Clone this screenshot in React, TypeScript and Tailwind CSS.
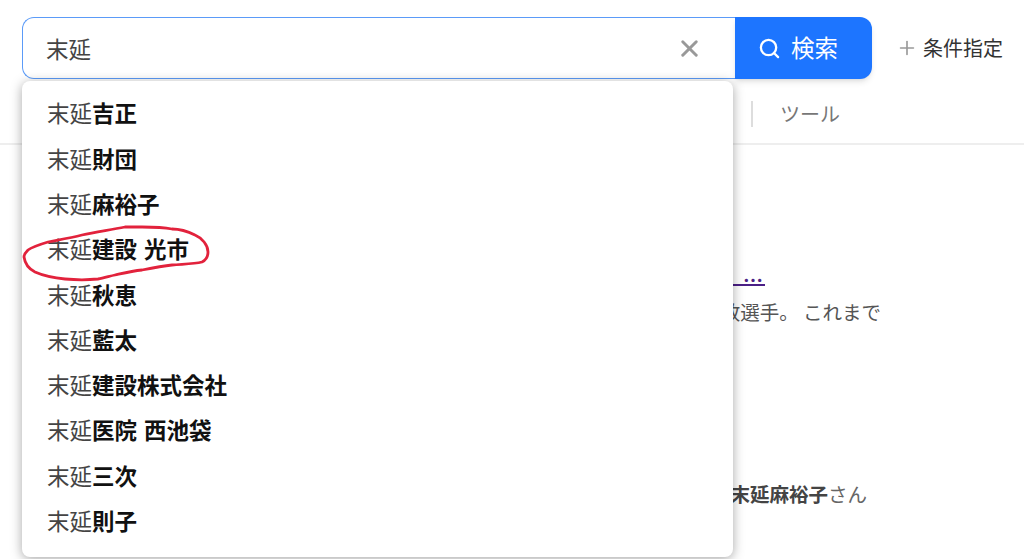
import React from 'react';
import { Search, X, Plus } from 'lucide-react';

const suggestions = [
  '吉正',
  '財団',
  '麻裕子',
  '建設 光市',
  '秋恵',
  '藍太',
  '建設株式会社',
  '医院 西池袋',
  '三次',
  '則子',
];

const fontStack = "font-['Noto_Sans_CJK_JP','Noto_Sans',sans-serif]";

function App() {
  return (
    <div className={`relative h-[559px] w-[1024px] overflow-hidden bg-white ${fontStack}`}>
      <header className="h-[145px] border-b-2 border-[#eeeeee]">
        <div className="flex items-center pl-[22px] pt-[17px]">
          <div className="flex h-[62px] w-[713px] items-center rounded-l-xl border border-r-0 border-[#5b9bf8] pl-[23px] pr-[32px]">
            <span className="flex-1 text-[22.5px] leading-none text-[#444444]">末延</span>
            <X size={27} strokeWidth={2.6} className="text-[#999999]" />
          </div>
          <button className="flex h-[62px] w-[137px] items-center justify-center gap-[10px] rounded-r-xl bg-[#1d75ff] pr-[11px] text-[23.5px] leading-none text-white shadow-md shadow-black/10">
            <Search size={23} strokeWidth={2.4} />
            検索
          </button>
          <div className="ml-[24px] flex items-center gap-[5px] text-[#333333]">
            <Plus size={22} strokeWidth={1.8} className="text-[#999999]" />
            <span className="text-[20px] leading-none">条件指定</span>
          </div>
        </div>
        <div className="ml-[751px] mt-[22px] flex h-[26px] items-center border-l-2 border-[#dddddd] pl-[27px]">
          <span className="text-[20px] leading-none text-[#777777]">ツール</span>
        </div>
      </header>

      <main className="pl-[540px]">
        <a className="mt-[113px] block h-[28px] w-[225px] border-b-2 border-[#4b1f86] pr-[2px] text-right text-[20px] font-bold leading-[44px] text-[#4b1f86]">
          …
        </a>
        <p className="mt-[12px] w-[341px] whitespace-nowrap text-right text-[19.5px] leading-[28px] text-[#555555]">
          政選手。 これまで
        </p>
        <p className="mt-[154px] w-[327px] whitespace-nowrap text-right text-[19.5px] leading-[28px] text-[#666666]">
          <b className="font-bold text-[#444444]">末延麻裕子</b>さん
        </p>
      </main>

      <div className="absolute left-[22px] top-[81px] w-[711px] rounded-lg bg-white pb-[14px] pt-[9px] shadow-[0_2px_12px_rgba(0,0,0,0.35)]">
        {suggestions.map((item) => (
          <div key={item} className="flex h-[45.3px] items-center pl-[25px] text-[22.5px] leading-none text-[#444444]">
            末延<b className="whitespace-pre font-bold text-[#111111] [word-spacing:2px]">{item}</b>
          </div>
        ))}
      </div>

      {/* hand drawn marker circle */}
      <svg className="absolute left-0 top-0" width="1024" height="559" fill="none">
        <path
          d="M208 252C208 245 202 238 195 235C187 231 178 229 172 229C162 227 152 227 142 227C136 227 130 227 125 227C110 230 96 232 82 235C70 238 58 240 48 242C38 245 32 247 28 250C25 253 24 255 24 257C25 264 29 269 35 272C44 276 54 278 65 279C76 280 88 280 98 279C104 278 110 276 115 275C124 273 132 271 142 270C152 268 162 266 172 265C184 264 194 264 202 262C206 260 208 256 208 252Z"
          stroke="#e2223c"
          strokeWidth="2.8"
        />
      </svg>
    </div>
  );
}

export default App;
